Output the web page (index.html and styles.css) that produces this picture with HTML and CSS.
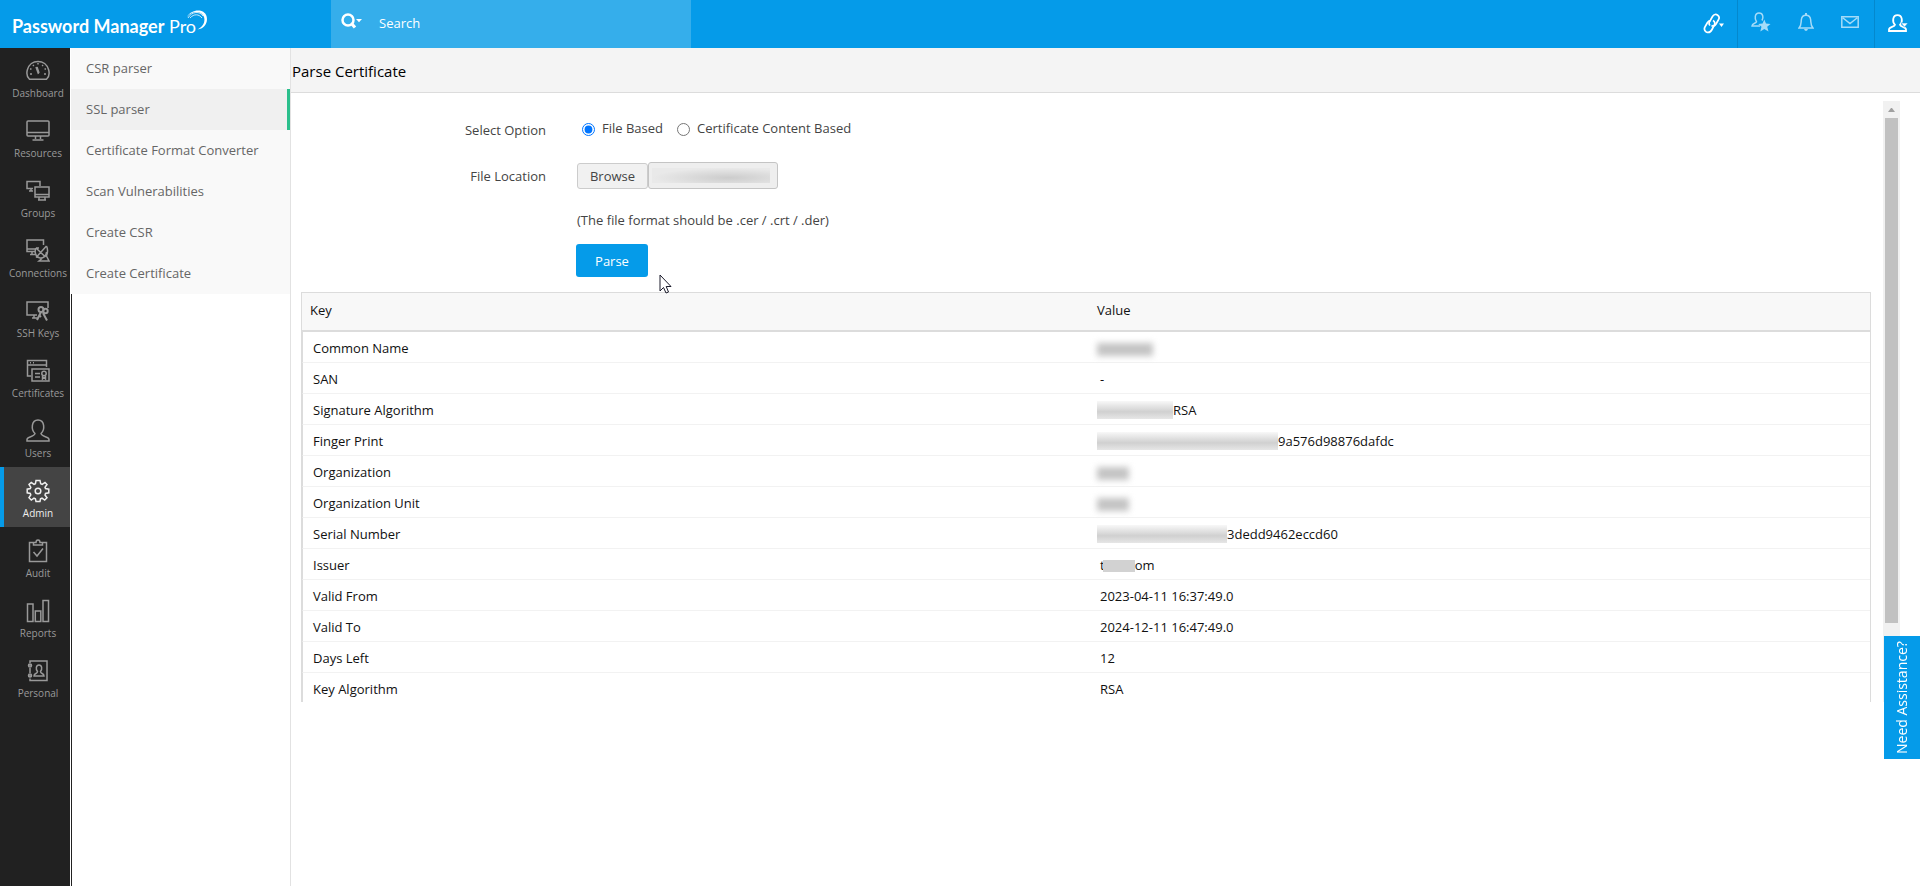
FILE: index.html
```html
<!DOCTYPE html>
<html lang="en">
<head>
<meta charset="utf-8">
<title>Password Manager Pro</title>
<link rel="stylesheet" href="styles.css">
</head>
<body>
<header class="topbar">
  <a class="brand" href="#"><span><b>Password Manager</b> Pro</span>
    <svg class="swoosh" viewBox="0 0 22 22" width="22" height="22" fill="#fff"><path d="M1 7C5-1 18-2 20.500 6C22.500 13 18 19 11.500 19.500C17 17 19.500 12 18 7C16 .5 6 0 1 7Z"/><path d="M2 8C6 1 14 1 17 6M4 8C8 3.500 13 4 16 8" fill="none" stroke="#fff" stroke-width=".8"/></svg>
  </a>
  <form class="search">
    <button type="button" class="plain" aria-label="Search type"><svg viewBox="0 0 22 18" width="22" height="18"><circle cx="7" cy="8" r="5.500" fill="none" stroke="#fff" stroke-width="2.500"/><path d="M10.500 11.500L14 15.500" stroke="#fff" stroke-width="3.200"/><path d="M15 7H21L18 10.200Z" fill="#fff"/></svg></button>
    <input type="text" placeholder="Search" aria-label="Search">
  </form>
  <nav class="tools" aria-label="Tools">
    <button class="plain link" aria-label="Links"><svg viewBox="0 0 22 22" width="22" height="22" fill="none" stroke="#fff" stroke-width="1.700"><path d="M7 12.500C5.500 11 6 9 7.500 7L9.500 3.500C11 1.200 13 1 14.700 2.200C16.500 3.500 16.500 5.200 15.300 7L13 11C11.800 13 10 13.500 8.500 12.500"/><path d="M10 7.500C12 8.500 12.300 10.500 11 12.500L9 16.500C7.500 19.500 5.500 20 3.300 19C1 17.500 1 15.500 2.200 13.500L4.500 9.500C5.300 8.200 6.500 7.500 8 7.500"/><path d="M16 10.500H21L18.500 14Z" fill="#fff" stroke="none"/></svg></button>
    <div class="middle">
      <button class="plain" aria-label="Favourite users"><svg viewBox="0 0 20 20" width="20" height="20"><path d="M9 14H1C1 11 5 11.500 5.500 9.800C3.500 7 3.500 1 8 1C12.500 1 12.500 6 11 8.500" fill="none" stroke="#a5dbf8" stroke-width="1.500"/><path d="M13.300 7.500L15 11.500L19.500 12L16.200 14.800L17.500 19.500L13.300 17L9.300 19.500L10.500 14.800L7.200 12L11.600 11.500Z" fill="#a5dbf8"/></svg></button>
      <button class="plain" aria-label="Notifications"><svg viewBox="0 0 16 18" width="16" height="18"><path d="M1 15C3.500 12.500 3 10 3.300 7C3.700 3 6 2.200 8 2.200S12.300 3 12.700 7C13 10 12.500 12.500 15 15Z" fill="none" stroke="#a5dbf8" stroke-width="1.500"/><path d="M7 0H9V2H7ZM6 16H10L9 17.800H7Z" fill="#a5dbf8"/></svg></button>
      <button class="plain" aria-label="Messages"><svg viewBox="0 0 18 12" width="18" height="12" fill="none" stroke="#a5dbf8" stroke-width="1.500"><path d="M.8.800H17.200V11.200H.8ZM2 2L9 7.500L16 2"/></svg></button>
    </div>
    <button class="plain account" aria-label="Account"><svg viewBox="0 0 20 18" width="20" height="18"><path d="M1 17V15.500C1 13 6.500 13 7 10.800C4 8 4.500 1.200 9.500 1.200S15 8 12 10.800C12.500 13 18 13 18 15.500V17Z" fill="none" stroke="#fff" stroke-width="1.800"/><path d="M13 9H20L16.500 13.200Z" fill="#fff" stroke="#059be9" stroke-width=".6"/></svg></button>
  </nav>
</header>
<div class="shell">
  <nav class="rail" aria-label="Main">
    <a href="#"><svg viewBox="0 0 24 24"><path d="M3.500 20.300C.5 17.500 .8 13 1.300 11C4-.5 20-.5 22.700 11C23.200 13 23.500 17.500 20.500 20.300Z"/><path d="M10 8L12.500 15M11 8L13 14M12 4V5.500M7 6L7.800 7M17 6L16.200 7M4 10H5.500M18.500 10H20M4 15H6M18 15H20"/></svg>Dashboard</a>
    <a href="#"><svg viewBox="0 0 24 24"><rect x="1" y="2" width="22" height="15" rx="1"/><path d="M1 13.500H23M9.500 17V20M14.500 17V20M6.500 21H17.500"/></svg>Resources</a>
    <a href="#"><svg viewBox="0 0 24 24"><path d="M7 9.500H1V2.500H14V7M3 12H7M5 9.500V12"/><rect x="9" y="8" width="14" height="10"/><path d="M9 15.500H23M13 18V20.500M19 18V20.500M12 21H20"/></svg>Groups</a>
    <a href="#"><svg viewBox="0 0 24 24"><path d="M9 12.500H1V1H17.500V6M1 10H9M4 15.500H10M6 12.500V15"/><path d="M10 9C8 13 10 18.500 14 19C17 19.500 20.500 17 20.500 13M10 9L19.500 18M10 18.500L20.500 7M20.500 7C22 10 22 13 20.500 17L23 22H13L16 19.500M10 9H13"/></svg>Connections</a>
    <a href="#"><svg viewBox="0 0 24 24"><path d="M11 16H1V3H22V9M6 19H11M8 16V19"/><g stroke-width="2"><circle cx="15" cy="10.500" r="2.500"/><circle cx="19.500" cy="12" r="2.200"/><path d="M15 13L11 21M17 14L21 21.500M13 16L15 18"/></g></svg>SSH Keys</a>
    <a href="#"><svg viewBox="0 0 24 24"><path d="M5 17H1.500V1.500H20.500V8M1.500 6H20.500M4 3.800H5M7 3.800H8"/><rect x="6" y="10" width="17" height="12"/><path d="M9 14.500H14M9 18H14"/><circle cx="18" cy="14.500" r="2.200"/><path d="M16.500 17V20L18 18.500L19.500 20V17"/></svg>Certificates</a>
    <a href="#"><svg viewBox="0 0 24 24"><path d="M1 22V20.500C1 17.500 8.500 18 9 14.500C5 11 5 1 12 1S19 11 15 14.500C15.500 18 23 17.500 23 20.500V22Z"/></svg>Users</a>
    <a href="#" class="active" aria-current="page"><svg viewBox="0 0 24 24"><path d="M10 1.500H14L14.700 4.800L16.200 5.400L19 3.500L21 5.500L19 8.300L19.500 9.500L22.800 10.200V13.800L19.500 14.500L19 16L21 18.700L18.700 21L16 19.200L14.500 19.700L14 22.500H10L9.400 19.700L8 19.200L5.300 21L3 18.700L4.800 16L4.300 14.500L1.200 13.800V10.200L4.300 9.500L4.800 8.300L3 5.500L5.300 3.500L8 5.400L9.400 4.800Z"/><circle cx="12" cy="12" r="2.800"/></svg>Admin</a>
    <a href="#"><svg viewBox="0 0 24 24"><path d="M8 3.500H3.500V22.500H20.500V3.500H16M7.500 6V3.500H10C10 0 14 0 14 3.500H16.500V6ZM7.500 13L11 17L17 9.500"/></svg>Audit</a>
    <a href="#"><svg viewBox="0 0 24 24"><rect x="1.500" y="5" width="5.500" height="17.500"/><rect x="9.300" y="12" width="5.500" height="10.500"/><rect x="17" y="1.500" width="5.500" height="21"/></svg>Reports</a>
    <a href="#"><svg viewBox="0 0 24 24"><path d="M4 4V2H21V21.500H4V19.500M4 9V14M2 6H6M2 17H6"/><circle cx="4" cy="6.500" r="1.500"/><circle cx="4" cy="16.500" r="1.500"/><path d="M8 17C8 14 11.500 15 11.500 12.500C9.500 10 10 6 13 6S16.500 10 14.500 12.500C14.500 15 18 14 18 17Z"/></svg>Personal</a>
  </nav>
  <aside class="submenu">
    <nav aria-label="Certificate tools">
      <a href="#">CSR parser</a>
      <a href="#" class="current" aria-current="page">SSL parser</a>
      <a href="#">Certificate Format Converter</a>
      <a href="#">Scan Vulnerabilities</a>
      <a href="#">Create CSR</a>
      <a href="#">Create Certificate</a>
    </nav>
  </aside>
  <main>
    <h1>Parse Certificate</h1>
    <div class="panel">
      <div class="content">
        <form class="parser">
          <span class="label" id="opt">Select Option</span>
          <div class="options" role="radiogroup" aria-labelledby="opt">
            <label><input type="radio" name="mode" checked>File Based</label>
            <label><input type="radio" name="mode">Certificate Content Based</label>
          </div>
          <label class="label" for="file">File Location</label>
          <div class="file">
            <button type="button" class="browse">Browse</button>
            <div class="field"><input type="text" id="file" disabled><span class="veil"></span></div>
          </div>
          <p class="hint">(The file format should be .cer / .crt / .der)</p>
          <button type="button" class="submit">Parse</button>
        </form>
        <table>
          <thead><tr><th scope="col">Key</th><th scope="col">Value</th></tr></thead>
          <tbody>
            <tr><td>Common Name</td><td><span class="mask soft w56"></span></td></tr>
            <tr><td>SAN</td><td>-</td></tr>
            <tr><td>Signature Algorithm</td><td><span class="mask w75"></span>RSA</td></tr>
            <tr><td>Finger Print</td><td><span class="mask w180"></span>9a576d98876dafdc</td></tr>
            <tr><td>Organization</td><td><span class="mask soft w36"></span></td></tr>
            <tr><td>Organization Unit</td><td><span class="mask soft w36"></span></td></tr>
            <tr><td>Serial Number</td><td><span class="mask w131"></span>3dedd9462eccd60</td></tr>
            <tr><td>Issuer</td><td>t<span class="mask inner"></span>om</td></tr>
            <tr><td>Valid From</td><td>2023-04-11 16:37:49.0</td></tr>
            <tr><td>Valid To</td><td>2024-12-11 16:47:49.0</td></tr>
            <tr><td>Days Left</td><td>12</td></tr>
            <tr><td>Key Algorithm</td><td>RSA</td></tr>
          </tbody>
        </table>
      </div>
      <div class="scrollbar" aria-hidden="true"><span class="arrow"></span><span class="thumb"></span></div>
    </div>
  </main>
</div>
<button class="assist">Need Assistance?</button>
<svg class="cursor" viewBox="0 0 13 20" width="13" height="20" aria-hidden="true"><path d="M1 1V17L4.500 13.500L7 19L9.500 18L7.200 12.500H12Z" fill="#fff" stroke="#1a1a2a"/></svg>
</body>
</html>
```
FILE: styles.css
```css
* { box-sizing: border-box; }
body {
  margin: 0;
  min-height: 100vh;
  display: flex;
  flex-direction: column;
  font: 13px/18px "Open Sans", "Noto Sans", sans-serif;
  color: #111;
  background: #fff;
}
a { color: inherit; text-decoration: none; }
button, input { font: inherit; color: inherit; }
.plain { padding: 0; border: 0; background: none; display: flex; }

.topbar { display: flex; height: 48px; background: #059be9; color: #fff; }
.brand {
  width: 331px;
  padding: 9px 0 0 12px;
  display: flex;
  font: 400 18px/34px Lato, sans-serif;
}
.brand b { font-weight: 700; }
.swoosh { margin: 1px 0 0 -10px; }
.search { width: 360px; display: flex; align-items: center; padding: 0 10px 2px; gap: 16px; background: #35aeeb; }
.search svg { margin-top: -4px; }
.search input { flex: 1; min-width: 0; padding: 0; border: 0; outline: 0; background: none; }
.search input::placeholder { color: #fff; opacity: 1; }
.tools { margin-left: auto; display: flex; }
.tools button { align-items: center; }
.link { padding-right: 12px; }
.middle { display: flex; align-items: center; gap: 27px; padding: 0 15px 4px 13px; border: solid #0488cd; border-width: 0 1px; }
.account { padding: 0 12px 2px 13px; }

.shell { flex: 1; display: flex; }
.rail { width: 70px; background: #212121; color: #999; font-size: 10px; line-height: 14px; }
.rail a { display: flex; flex-direction: column; align-items: center; height: 60px; padding: 12px 0 0 6px; }
.rail a:first-child { height: 59px; padding-top: 11px; }
.rail svg { width: 24px; height: 24px; flex: none; margin-bottom: 3px; fill: none; stroke: #999; stroke-width: 1.500; }
.rail .active { padding-left: 2px; border-left: 4px solid #059be9; background: #444; color: #eee; }
.rail .active svg { stroke: #eee; }
.submenu { width: 220px; margin-left: 1px; border-left: 1px solid #222; border-right: 1px solid #e2e2e2; }
.submenu nav { margin-left: -1px; background: #f9f9f9; color: #666; }
.submenu a { display: block; height: 41px; padding: 11px 15px; }
.submenu .current { background: #f0f0f0; border-right: 3px solid #2bbf8c; }

main { flex: 1; min-width: 0; }
h1 { margin: 0; height: 45px; padding: 13px 1px; font-size: 15px; line-height: 20px; font-weight: 400; background: #f4f4f4; border-bottom: 1px solid #dcdcdc; color: #000; }
.panel { display: flex; gap: 12px; height: calc(100vh - 285px); margin: 8px 20px 0 10px; }
.content { flex: 1; min-width: 0; overflow: hidden; }
.parser { display: grid; grid-template-columns: 245px 1fr; column-gap: 31px; color: #444; padding-top: 18px; }
.label { text-align: right; padding-top: 2px; }
.options { display: flex; height: 43px; }
.options label { display: flex; height: 18px; align-items: center; margin-right: 12px; }
.options input { width: 13px; height: 13px; margin: 2px 7px 0 5px; }
.options label + label input { margin-left: 2px; }
.parser .label[for] { padding-top: 5px; }
.file { display: flex; align-items: flex-end; height: 27px; }
.browse { width: 71px; height: 26px; padding: 0; border: 1px solid #ccc; border-radius: 3px; background: #f1f1f1; }
.field { position: relative; }
.field input { display: block; width: 130px; height: 27px; border: 1px solid #c4c4c4; border-radius: 3px; background: #eee; }
.veil { position: absolute; inset: 6px 8px 6px 4px; background: radial-gradient(ellipse at 65% 65%, #ccc, #e9e9e9 70%); }
.hint, .submit { grid-column: 2; }
.hint { margin: 22px 0 15px; }
.submit { width: 72px; height: 33px; margin-left: -1px; border: 0; border-radius: 3px; background: #059be9; color: #fff; }
table { width: 100%; margin-top: 15px; border-collapse: separate; border-spacing: 0; table-layout: fixed; border: 1px solid #dcdcdc; border-bottom: 0; }
th { height: 39px; padding: 0 8px 4px; text-align: left; font-weight: 400; background: #f8f8f8; border-bottom: 2px solid #dcdcdc; }
th + th { padding-left: 11px; }
td { height: 31px; padding: 1px 10px 0; border-bottom: 1px solid #f2f2f2; }
td:first-child { border-left: 1px solid #dcdcdc; }
td + td { padding-left: 14px; }
.mask { display: inline-block; height: 18px; margin-left: -3px; vertical-align: top; background: linear-gradient(#f8f8f8, #d0d0d0 60%, #e6e6e6); }
.soft { height: 13px; margin-top: 4px; filter: blur(3px); background: #c4c4c4; }
.w36 { width: 32px; }
.w56 { width: 56px; }
.w75 { width: 76px; }
.w131 { width: 130px; }
.w180 { width: 181px; }
.inner { width: 32px; height: 12px; margin: 4px 0 0 -2px; background: #d2d2d2; }
.scrollbar { width: 17px; height: 100%; padding: 0 2px; background: #f1f1f1; }
.arrow { display: block; width: 7px; margin: 0 auto; padding-top: 7px; height: 17px; }
.arrow::before { content: ""; display: block; border: solid transparent; border-width: 0 3px 4px; border-bottom-color: #a0a0a0; }
.thumb { display: block; height: 84%; background: #c1c1c1; }
.assist { position: fixed; right: 0; top: 636px; width: 36px; height: 123px; padding: 0; border: 0; background: #059be9; color: #fff; font-size: 14px; writing-mode: vertical-rl; transform: rotate(180deg); }
.cursor { position: absolute; left: 659px; top: 274px; }
```
